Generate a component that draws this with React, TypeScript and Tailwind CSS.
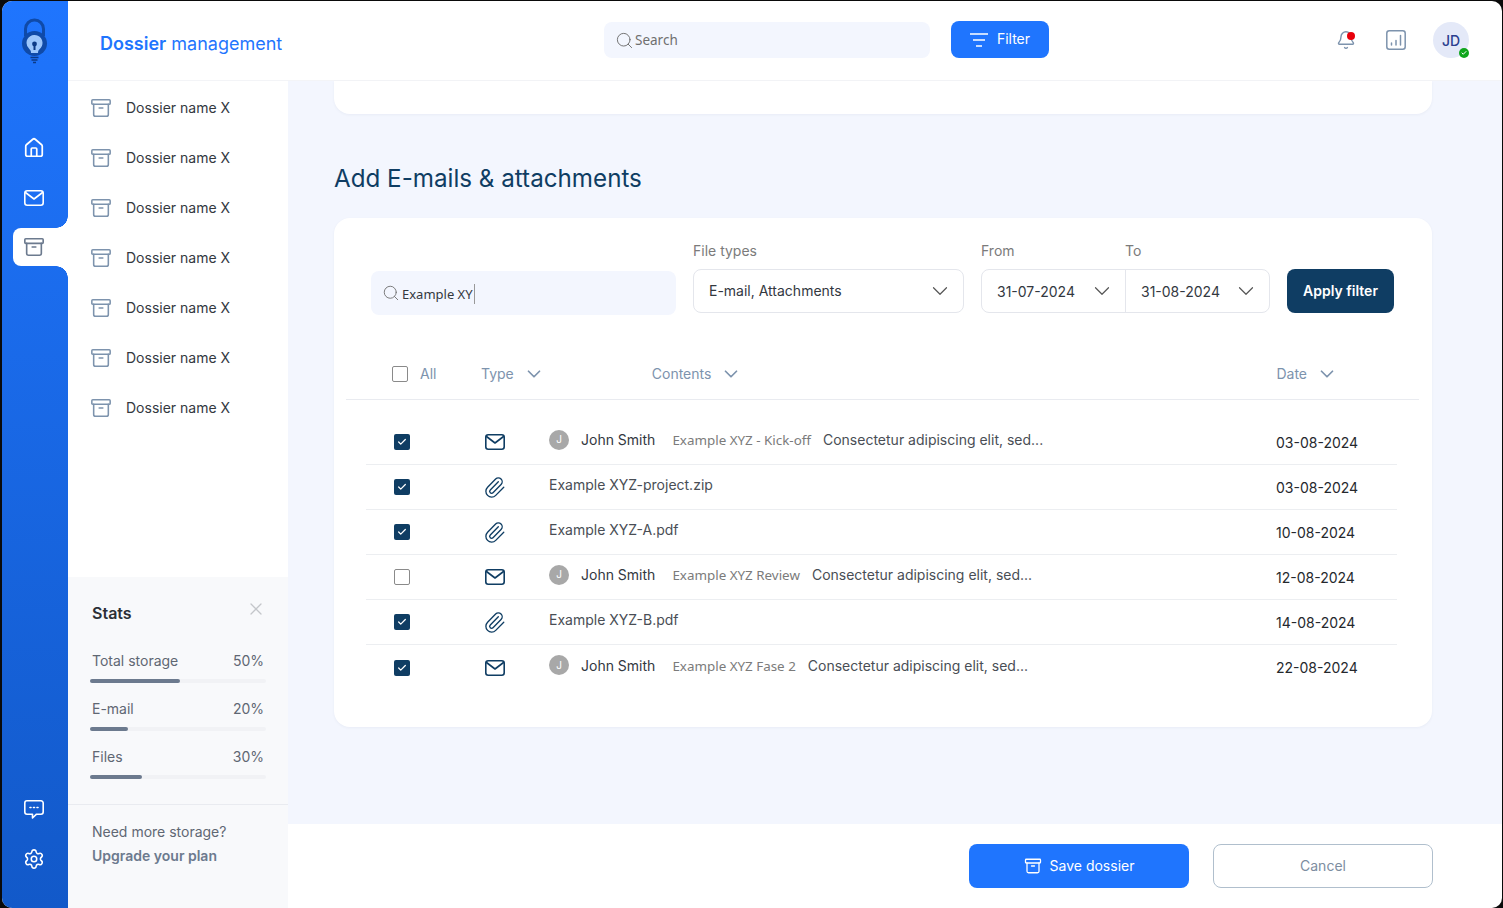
import React from 'react';
import { Archive, Bell, ChevronDown, House, Paperclip, Search, Settings, X, Check } from 'lucide-react';

function Logo() {
  return (
    <svg width="27" height="46" viewBox="0 0 27 46" fill="none">
      <path d="M4.500 18v-7a9 9 0 0 1 18 0v7" stroke="#0f4aa8" strokeWidth="3" />
      <circle cx="13.500" cy="25.500" r="12.500" fill="#0f4aa8" />
      <path d="M5.500 25a8 8 0 1 1 13 6.200c-1 .8-1.500 2-1.500 3.800h-7c0-1.800-.5-3-1.500-3.800a8 8 0 0 1-3-6.200z" fill="#9cc6fb" />
      <circle cx="13.500" cy="26" r="2.400" fill="#0c3a86" />
      <rect x="12.500" y="26" width="2" height="6" fill="#0c3a86" />
      <path d="M9.500 39.500h8M10.500 42h6M12 44.500h3" stroke="#0c3a86" strokeWidth="1.300" />
    </svg>
  );
}

function MailIcon({ className }: { className?: string }) {
  return (
    <svg className={className} width="20" height="16" viewBox="0 0 20 16" fill="none" stroke="currentColor" strokeWidth="1.600" strokeLinejoin="round" strokeLinecap="round">
      <rect x="0.800" y="0.800" width="18.400" height="14.400" rx="2.400" />
      <path d="M1.500 2.500 10 9l8.500-6.500" />
    </svg>
  );
}

function ChatIcon() {
  return (
    <svg width="20" height="19" viewBox="0 0 20 19" fill="none" stroke="currentColor" strokeWidth="1.600" strokeLinejoin="round">
      <path d="M3 .8h14A2.200 2.200 0 0 1 19.200 3v9a2.200 2.200 0 0 1-2.200 2.200h-4.500L8.500 18v-3.800H3A2.200 2.200 0 0 1 .8 12V3A2.200 2.200 0 0 1 3 .8z" />
      <path d="M6 7.500h1M9.500 7.500h1M13 7.500h1" strokeLinecap="round" />
    </svg>
  );
}

function FilterIcon() {
  return (
    <svg width="18" height="14" viewBox="0 0 18 14" fill="none" stroke="currentColor" strokeWidth="1.400">
      <path d="M0 1h18M3 7h12M6 13h6" />
    </svg>
  );
}

function ChartIcon() {
  return (
    <svg width="20" height="20" viewBox="0 0 20 20" fill="none" stroke="#7d93ad" strokeWidth="1.500" strokeLinecap="round">
      <rect x="0.800" y="0.800" width="18.400" height="18.400" rx="2.500" />
      <path d="M5.500 15v-2M10 15v-4.500M14.500 15V5.500" />
    </svg>
  );
}

function Checkbox({ checked }: { checked: boolean }) {
  if (checked) {
    return (
      <span className="flex h-4 w-4 items-center justify-center rounded-[2px] bg-[#0f3d63] text-white">
        <Check size={10} strokeWidth={3} />
      </span>
    );
  }
  return <span className="block h-4 w-4 rounded-[2px] border border-[#8a8a8a] bg-white" />;
}

function RailButton({ children }: { children: React.ReactNode }) {
  return <div className="flex h-[50px] w-[64px] items-center justify-center text-white">{children}</div>;
}

function StatRow({ label, value, fill }: { label: string; value: string; fill: string }) {
  return (
    <div className="h-[48px] w-[176px]">
      <div className="flex justify-between px-[2px] text-[14px] leading-[20px] text-[#5f6773]">
        <span>{label}</span>
        <span>{value}</span>
      </div>
      <div className="mt-[8px] h-[4px] w-[176px] rounded-full bg-[#f1f2f5]">
        <div className={`h-[4px] rounded-full bg-[#6c7a8e] ${fill}`} />
      </div>
    </div>
  );
}

function Avatar() {
  return (
    <span className="mt-[2px] flex h-5 w-5 shrink-0 items-center justify-center rounded-full bg-[#a8a8a8] text-[10px] text-white">J</span>
  );
}

const rows = [
  { checked: true, kind: 'mail', subject: 'Example XYZ - Kick-off', date: '03-08-2024' },
  { checked: true, kind: 'file', name: 'Example XYZ-project.zip', date: '03-08-2024' },
  { checked: true, kind: 'file', name: 'Example XYZ-A.pdf', date: '10-08-2024' },
  { checked: false, kind: 'mail', subject: 'Example XYZ Review', date: '12-08-2024' },
  { checked: true, kind: 'file', name: 'Example XYZ-B.pdf', date: '14-08-2024' },
  { checked: true, kind: 'mail', subject: 'Example XYZ Fase 2', date: '22-08-2024' },
];

export default function App() {
  return (
    <div className="h-[908px] w-[1503px] overflow-hidden bg-[#0a0a0a] pl-[2px] pr-px pt-px font-[Inter,sans-serif]">
      <div className="flex h-[907px] overflow-hidden rounded-[10px] bg-white">
        <aside className="flex w-[66px] shrink-0 flex-col bg-gradient-to-b from-[#1f75fe] to-[#1259c9]">
          <div className="flex h-[122px] justify-center pr-[1px] pt-[17px]">
            <Logo />
          </div>
          <RailButton><House size={22} strokeWidth={1.900} /></RailButton>
          <RailButton><MailIcon /></RailButton>
          <div className="relative ml-[11px] mt-[5px] flex h-[38px] w-[55px] items-center rounded-l-[8px] bg-white pl-[10px] text-[#6c7a8e]">
            <span className="absolute -top-[12px] right-0 h-[12px] w-[12px] bg-[radial-gradient(circle_at_0_0,transparent_11.5px,white_12px)]" />
            <span className="absolute -bottom-[12px] right-0 h-[12px] w-[12px] bg-[radial-gradient(circle_at_0_100%,transparent_11.5px,white_12px)]" />
            <Archive size={22} strokeWidth={1.800} />
          </div>
          <div className="mt-auto pb-[24px]">
            <RailButton><ChatIcon /></RailButton>
            <RailButton><Settings size={22} strokeWidth={1.700} /></RailButton>
          </div>
        </aside>

        <div className="flex min-w-0 flex-1 flex-col">
          <header className="flex h-[80px] shrink-0 items-center border-b border-[#f3f4f7] pb-px">
            <h1 className="ml-[32px] w-[504px] pt-[6px] text-[18px] text-[#1f75fe]">
              <span className="font-semibold">Dossier</span> management
            </h1>
            <div className="flex h-[36px] w-[326px] items-center rounded-lg bg-[#f3f6fe] pl-[11px] font-['Noto_Sans',sans-serif] text-[13.500px] text-[#6f6f6f]">
              <Search size={19} strokeWidth={1.200} />
              <span className="ml-[1px]">Search</span>
            </div>
            <div className="-mt-[1px] ml-[21px] flex h-[37px] w-[98px] items-center justify-center gap-[9px] rounded-lg bg-[#1f75fe] text-[14px] text-white">
              <FilterIcon />
              <span className="mb-[2px]">Filter</span>
            </div>
            <div className="ml-auto flex items-center pr-[33px]">
              <div className="relative text-[#7d93ad]">
                <Bell size={20} strokeWidth={1.700} />
                <span className="absolute left-[11px] top-[2px] h-2 w-2 rounded-full bg-[#e8000b]" />
              </div>
              <div className="ml-[30px]"><ChartIcon /></div>
              <div className="relative ml-[27px] flex h-[36px] w-[36px] items-center justify-center rounded-full bg-[#e4e9f8] text-[14px] font-medium text-[#2b3f8f]">
                JD
                <span className="absolute bottom-0 right-0 flex h-[10px] w-[10px] items-center justify-center rounded-full bg-[#0fa51c] text-white">
                  <Check size={6} strokeWidth={4} />
                </span>
              </div>
            </div>
          </header>

          <div className="flex min-h-0 flex-1">
            <nav className="flex w-[220px] shrink-0 flex-col">
              <div className="flex-1 pt-[2px]">
                {Array.from({ length: 7 }).map((_, i) => (
                  <div key={i} className="flex h-[50px] items-center pl-[22px] text-[14px] text-[#33383f]">
                    <Archive size={22} strokeWidth={1.700} className="text-[#7d93ad]" />
                    <span className="mb-[1px] ml-[14px]">Dossier name X</span>
                  </div>
                ))}
              </div>
              <div className="h-[331px] bg-[#f8f9fb]">
                <div className="relative h-[228px] border-b border-[#e9ebf0] pl-[22px]">
                  <div className="pl-[2px] pt-[26px] text-[16px] font-semibold leading-[20px] text-[#2b2f36]">Stats</div>
                  <X size={20} strokeWidth={1.500} className="absolute right-[22px] top-[22px] text-[#c4c6ca]" />
                  <div className="mt-[28px]">
                    <StatRow label="Total storage" value="50%" fill="w-[90px]" />
                    <StatRow label="E-mail" value="20%" fill="w-[38px]" />
                    <StatRow label="Files" value="30%" fill="w-[52px]" />
                  </div>
                </div>
                <div className="pl-[24px] pt-[15px] text-[14px] leading-[24px]">
                  <div className="text-[#5f6773]">Need more storage?</div>
                  <div className="font-semibold text-[#6c7a8e]">Upgrade your plan</div>
                </div>
              </div>
            </nav>

            <div className="flex min-w-0 flex-1 flex-col">
              <main className="min-h-0 flex-1 bg-[#f3f6fe] pl-[46px]">
                <div className="h-[33px] w-[1098px] rounded-b-[16px] bg-white shadow-[0_1px_3px_rgba(30,50,100,0.05)]" />
                <h2 className="mt-[49px] text-[24.200px] leading-[32px] text-[#0f3d63]">Add E-mails &amp; attachments</h2>
                <section className="mt-[23px] h-[509px] w-[1098px] rounded-[16px] bg-white pl-[12px] pt-[23px] shadow-[0_1px_3px_rgba(30,50,100,0.05)]">
                  <div className="flex items-end pl-[25px]">
                    <div className="mb-[-2px] flex h-[44px] w-[305px] items-center rounded-lg bg-[#f3f6fe] pl-[11px] font-['Noto_Sans',sans-serif] text-[13px] text-[#33383f]">
                      <Search size={18} strokeWidth={1.200} className="text-[#6f6f6f]" />
                      <span className="ml-[2px] mt-[2px] border-r border-[#999] pr-px leading-[20px]">Example XY</span>
                    </div>
                    <div className="ml-[17px] w-[271px]">
                      <div className="mb-[8px] text-[14px] leading-[20px] text-[#7b7b7b]">File types</div>
                      <div className="flex h-[44px] items-center justify-between rounded-lg border border-[#e4e6ec] pl-[15px] pr-[10px] text-[14px] text-[#33383f]">
                        <span className="mb-[1px]">E-mail, Attachments</span>
                        <ChevronDown size={26} strokeWidth={1.100} className="text-[#555]" />
                      </div>
                    </div>
                    <div className="ml-[17px] w-[289px]">
                      <div className="mb-[8px] flex text-[14px] leading-[20px] text-[#7b7b7b]">
                        <span className="w-[144px]">From</span>
                        <span>To</span>
                      </div>
                      <div className="flex h-[44px] rounded-lg border border-[#e4e6ec] text-[14px] text-[#33383f]">
                        <div className="flex w-[144px] items-center justify-between border-r border-[#e4e6ec] pl-[15px] pr-[10px]">
                          <span>31-07-2024</span>
                          <ChevronDown size={26} strokeWidth={1.100} className="text-[#555]" />
                        </div>
                        <div className="flex flex-1 items-center justify-between pl-[15px] pr-[10px]">
                          <span>31-08-2024</span>
                          <ChevronDown size={26} strokeWidth={1.100} className="text-[#555]" />
                        </div>
                      </div>
                    </div>
                    <div className="ml-[17px] flex h-[44px] w-[107px] items-center justify-center rounded-lg bg-[#0f3d63] pb-[2px] text-[14px] font-semibold text-white">
                      Apply filter
                    </div>
                  </div>

                  <div className="mt-[36px] flex h-[51px] w-[1073px] items-center border-b border-[#e9ebf0] pb-[1px] text-[14px] text-[#7d93ad]">
                    <span className="ml-[46px]"><Checkbox checked={false} /></span>
                    <span className="ml-[12px] w-[61px]">All</span>
                    <span>Type</span>
                    <ChevronDown size={22} strokeWidth={1.900} className="ml-[9px]" />
                    <span className="ml-[107px]">Contents</span>
                    <ChevronDown size={22} strokeWidth={1.900} className="ml-[9px]" />
                    <span className="ml-auto">Date</span>
                    <ChevronDown size={22} strokeWidth={1.900} className="ml-[9px] mr-[81px]" />
                  </div>

                  <div className="ml-[20px] mt-[20px] w-[1031px]">
                    {rows.map((row, i) => (
                      <div key={i} className={`flex h-[45px] items-center text-[14px] ${i < 5 ? 'border-b border-[#eceef1]' : ''}`}>
                        <span className="ml-[28px]"><Checkbox checked={row.checked} /></span>
                        <span className="ml-[75px] flex w-[64px] text-[#0f3d63]">
                          {row.kind === 'mail' ? <MailIcon /> : <Paperclip size={23} strokeWidth={1.400} className="-ml-[2px]" />}
                        </span>
                        <div className="flex flex-1 items-center pb-[6px]">
                          {row.kind === 'mail' ? (
                            <>
                              <Avatar />
                              <span className="ml-[12px] mt-[2px] text-[#33383f]">John Smith</span>
                              <span className="ml-[17px] mt-[3px] font-['Noto_Sans',sans-serif] text-[13.400px] text-[#7b7b7b]">{row.subject}</span>
                              <span className="ml-[12px] mt-[2px] text-[#494e55]">Consectetur adipiscing elit, sed...</span>
                            </>
                          ) : (
                            <span className="text-[#494e55]">{row.name}</span>
                          )}
                        </div>
                        <span className="w-[121px] text-[#25282d]">{row.date}</span>
                      </div>
                    ))}
                  </div>
                </section>
              </main>
              <footer className="flex h-[84px] shrink-0 items-center justify-end pr-[69px] text-[14px]">
                <div className="flex h-[44px] w-[220px] items-center justify-center gap-[8px] rounded-lg bg-[#1f75fe] pb-px text-white">
                  <Archive size={18} strokeWidth={1.700} />
                  <span>Save dossier</span>
                </div>
                <div className="ml-[24px] flex h-[44px] w-[220px] items-center justify-center rounded-lg border-[1.500px] border-[#b0bfcd] pb-px text-[#7d8d9f]">
                  Cancel
                </div>
              </footer>
            </div>
          </div>
        </div>
      </div>
    </div>
  );
}
